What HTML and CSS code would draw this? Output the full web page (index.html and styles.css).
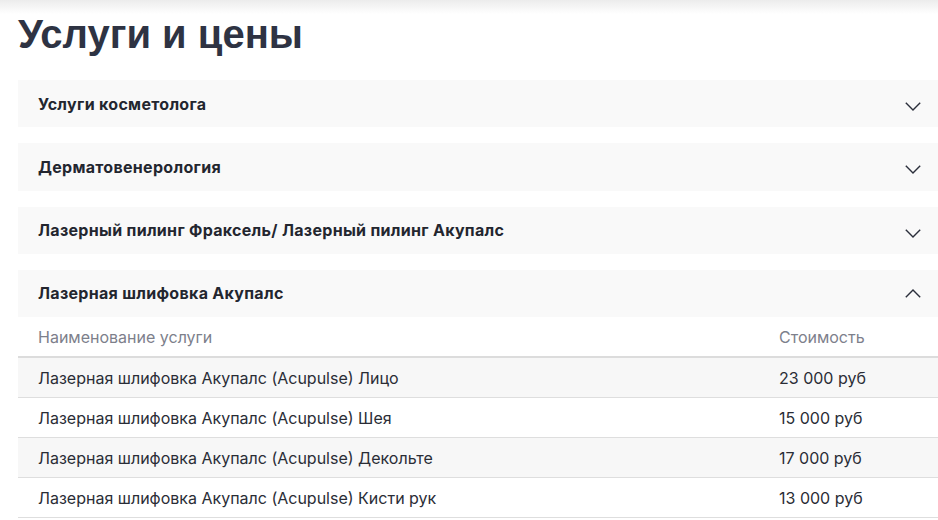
FILE: index.html
```html
<!DOCTYPE html>
<html lang="ru">
<head>
<meta charset="utf-8">
<link rel="stylesheet" href="styles.css">
</head>
<body>
<div class="topshade"></div>
<main class="page">
  <h1 class="title">Услуги и цены</h1>
  <div class="accordion">
    <section class="acc-item">
      <div class="acc-head"><span>Услуги косметолога</span>
        <svg class="chev" width="16" height="9" viewBox="0 0 16 9"><path d="M0.8 0.8 L8 8 L15.2 0.8" fill="none" stroke="#2b2f3b" stroke-width="1.4"/></svg>
      </div>
    </section>
    <section class="acc-item">
      <div class="acc-head"><span>Дерматовенерология</span>
        <svg class="chev" width="16" height="9" viewBox="0 0 16 9"><path d="M0.8 0.8 L8 8 L15.2 0.8" fill="none" stroke="#2b2f3b" stroke-width="1.4"/></svg>
      </div>
    </section>
    <section class="acc-item">
      <div class="acc-head"><span>Лазерный пилинг Фраксель/ Лазерный пилинг Акупалс</span>
        <svg class="chev" width="16" height="9" viewBox="0 0 16 9"><path d="M0.8 0.8 L8 8 L15.2 0.8" fill="none" stroke="#2b2f3b" stroke-width="1.4"/></svg>
      </div>
    </section>
    <section class="acc-item open">
      <div class="acc-head"><span>Лазерная шлифовка Акупалс</span>
        <svg class="chev up" width="16" height="9" viewBox="0 0 16 9"><path d="M0.8 8.2 L8 1 L15.2 8.2" fill="none" stroke="#2b2f3b" stroke-width="1.4"/></svg>
      </div>
      <table class="prices">
        <thead>
          <tr><th>Наименование услуги</th><th class="price">Стоимость</th></tr>
        </thead>
        <tbody>
          <tr><td>Лазерная шлифовка Акупалс (Acupulse) Лицо</td><td class="price">23 000 руб</td></tr>
          <tr><td>Лазерная шлифовка Акупалс (Acupulse) Шея</td><td class="price">15 000 руб</td></tr>
          <tr><td>Лазерная шлифовка Акупалс (Acupulse) Декольте</td><td class="price">17 000 руб</td></tr>
          <tr><td>Лазерная шлифовка Акупалс (Acupulse) Кисти рук</td><td class="price">13 000 руб</td></tr>
        </tbody>
      </table>
    </section>
  </div>
</main>
</body>
</html>
```
FILE: styles.css
```css
html, body {
  margin: 0;
  padding: 0;
  background: #fff;
  overflow: hidden;
}
body {
  font-family: "Inter", "Noto Sans", sans-serif;
  color: #2b2e37;
}
.topshade {
  position: absolute;
  left: 0;
  top: 0;
  width: 100%;
  height: 14px;
  background: linear-gradient(#ececec, rgba(255,255,255,0));
  pointer-events: none;
}
.page {
  padding: 10px 0 0 18px;
  width: 920px;
}
.title {
  margin: 0 0 21px 0;
  font-family: "Liberation Sans", "Arial", sans-serif;
  font-weight: 700;
  font-size: 40px;
  line-height: 49px;
  color: #2e3343;
}
.accordion {
  display: flex;
  flex-direction: column;
  gap: 16px;
}
.acc-head {
  height: 47.25px;
  background: #f9f9f9;
  display: flex;
  align-items: center;
  justify-content: space-between;
  padding: 0 17px 0 20px;
  font-weight: 700;
  font-size: 16px;
  letter-spacing: 0.3px;
  color: #23262f;
}
.chev { margin-top: 6px; }
.chev.up { margin-top: 0; }
.prices {
  width: 100%;
  border-collapse: collapse;
  font-size: 16px;
}
.prices th, .prices td {
  text-align: left;
  padding: 0 0 0 20px;
  height: 39px;
  border-bottom: 1px solid #dedede;
}
.prices th {
  font-weight: 400;
  color: #7d808b;
  border-bottom: 2px solid #dcdcdc;
}
.prices th.price, .prices td.price {
  width: 159px;
  padding-left: 0;
}
.prices tbody tr:nth-child(odd) { background: #f7f7f7; }
.prices td { color: #2a2d36; }
```
